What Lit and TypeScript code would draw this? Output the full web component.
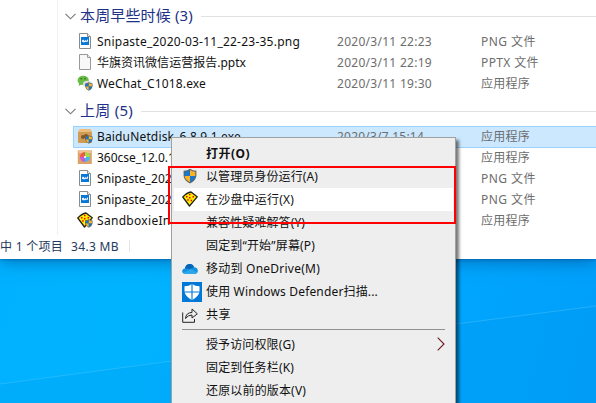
import { LitElement, html, css, svg, nothing } from "lit";
import { customElement, property } from "lit/decorators.js";

const shield = svg`<path d="M8 .8Q10.5 2.6 14.4 2.8V8Q13.8 12.6 8 15.4 2.2 12.6 1.6 8V2.8Q5.5 2.6 8 .8Z" fill="#5f6468"/><path d="M8 2Q6 3.5 2.7 3.8V8H8Z" fill="#1677cc"/><path d="M8 2Q10 3.5 13.3 3.8V8H8Z" fill="#fbb324"/><path d="M8 8H2.7Q3.2 12 8 14.2Z" fill="#fbb324"/><path d="M8 8H13.3Q12.8 12 8 14.2Z" fill="#1677cc"/>`;
const pizza = svg`<path d="M.8 6 Q5 1.5 9 1 L15.2 5.8 7.5 15Z" fill="#ffed00" stroke="#222" stroke-width="1.3" stroke-linejoin="round"/><g fill="#f00000"><rect x="7" y="2.8" width="1.5" height="1.5"/><rect x="4" y="5" width="1.5" height="1.5"/><rect x="7" y="6" width="1.5" height="1.5"/><rect x="10.5" y="5" width="1.5" height="1.5"/><rect x="5.2" y="8.2" width="1.5" height="1.5"/><rect x="8.6" y="8.7" width="1.5" height="1.5"/></g>`;
const badge = svg`<g transform="translate(7.2 6.8) scale(.58)">${shield}</g>`;
const icons: Record<string, unknown> = {
  png: svg`<path d="M2.5.5H10.5L13.5 3.5V15.5H2.5Z" fill="#fff" stroke="#8b8b8b"/><path d="M10.5 .5V3.5H13.5" fill="#eee" stroke="#8b8b8b"/><rect x="4" y="4" width="8" height="8" fill="#0877d5"/><path d="M5 9.3V7.5L6.2 6.5 7.5 8 8.5 7 9.4 8 11 6V9L10 8.3 9 9.3 8 8.6 7 9.8 6 8.6Z" fill="#fff"/>`,
  page: svg`<path d="M2.5.5H10.5L13.5 3.5V15.5H2.5Z" fill="#f8f8f8" stroke="#999"/><path d="M10.5 .5V3.5H13.5" fill="#eee" stroke="#999"/>`,
  wechat: svg`<ellipse cx="6.2" cy="5.4" rx="5.6" ry="4.7" fill="#69bd45"/><path d="M2 8 1.7 11 5 9Z" fill="#69bd45"/><circle cx="4.2" cy="3.8" r=".8" fill="#265d20"/><circle cx="8" cy="3.8" r=".8" fill="#265d20"/><ellipse cx="10.5" cy="9" rx="4.5" ry="3.2" fill="#dedede"/>${badge}`,
  box: svg`<path d="M3 1H13L15 4V14Q15 15 14 15H2Q1 15 1 14V4Z" fill="#d09b55"/><path d="M3 1H13L15 4H1Z" fill="#ebbf7b"/><circle cx="6" cy="9" r="2" fill="#815525"/><circle cx="9" cy="8" r="2" fill="#815525"/>${badge}`,
  browser: svg`<rect x=".8" y="1" width="14" height="14" fill="#dba269"/><path d="M1 1H15L14 4H2Z" fill="#efc498"/><path d="M8 8V3A5 5 0 0 1 13 8Z" fill="#9be04a"/><path d="M8 8H13A5 5 0 0 1 8 13Z" fill="#42b8ef"/><path d="M8 8V13A5 5 0 0 1 3 8Z" fill="#c957da"/><path d="M8 8H3A5 5 0 0 1 8 3Z" fill="#f4574a"/><circle cx="8" cy="8" r="1.1" fill="#fff"/>`,
  sandboxie: svg`${pizza}${badge}`,
  shield, pizza,
  cloud: svg`<path d="M3 12.7Q.2 12.7.2 10 .2 7.7 3 7.2 4 3 7.8 3 10.8 3 12 6.2 15.8 6.5 15.8 9.7 15.8 12.7 13 12.7Z" fill="#1490df"/><path d="M3 7.2Q4 3 7.8 3 10.8 3 12 6.2L8 8Z" fill="#0364b8"/><path d="M1 12 9 8 15 11.5Q14 12.7 13 12.7H3Z" fill="#28a8ea"/>`,
  defender: svg`<rect width="16" height="16" fill="#0078d7"/><path d="M8 1.6Q10.5 3.3 14 3.4V8Q13.2 11.8 8 14.5 2.8 11.8 2 8V3.4Q5.5 3.3 8 1.6Z" fill="#fff"/><path d="M8 1V15M1.5 8H14.5" stroke="#0078d7" stroke-width=".9"/>`,
  share: svg`<path d="M.7 5.5V15.3H12.5V12M3.5 11.5Q4 5.5 10 5.5V2L15.3 6.8 10 11V8Q6 8 3.5 11.5Z" fill="none" stroke="#222" stroke-width="1"/>`,
};
const icon = (name: string) => html`<svg class="icon ${name}" viewBox="0 0 16 16">${icons[name]}</svg>`;

/** A single-line label whose tracking is adjusted to a known advance width. */
@customElement("fit-label")
class FitLabel extends LitElement {
  static styles = css`:host{display:block;white-space:pre}span{display:inline-block}`;
  @property() text = "";
  @property({ type: Number }) advance = 0;
  firstUpdated() {
    const span = this.renderRoot.querySelector("span")!;
    const fit = () => {
      span.style.letterSpacing = "0";
      const natural = span.getBoundingClientRect().width;
      span.style.letterSpacing = `${(this.advance - natural) / Array.from(this.text).length}px`;
    };
    fit();
    document.fonts.ready.then(fit);
  }
  render() { return html`<span>${this.text}</span>`; }
}

interface FileRow { icon: string; name: string; w: number; date?: string; dw?: number; kind: string; kw: number; selected?: boolean }
const recent: FileRow[] = [
  { icon: "png", name: "Snipaste_2020-03-11_22-23-35.png", w: 203, date: "2020/3/11 22:23", dw: 95, kind: "PNG 文件", kw: 55 },
  { icon: "page", name: "华旗资讯微信运营报告.pptx", w: 149, date: "2020/3/11 22:19", dw: 95, kind: "PPTX 文件", kw: 58 },
  { icon: "wechat", name: "WeChat_C1018.exe", w: 109, date: "2020/3/11 19:30", dw: 95, kind: "应用程序", kw: 49 },
];
const lastWeek: FileRow[] = [
  { icon: "box", name: "BaiduNetdisk_6.8.9.1.exe", w: 144, date: "2020/3/7 15:14", dw: 87, kind: "应用程序", kw: 49, selected: true },
  { icon: "browser", name: "360cse_12.0.1190.0.exe", w: 131, kind: "应用程序", kw: 49 },
  { icon: "png", name: "Snipaste_2020-03-03.png", w: 143, kind: "PNG 文件", kw: 55 },
  { icon: "png", name: "Snipaste_2020-03-02.png", w: 143, kind: "PNG 文件", kw: 55 },
  { icon: "sandboxie", name: "SandboxieInstall.exe", w: 122, kind: "应用程序", kw: 49 },
];
const commands = [
  { text: "打开(O)", w: 44, cls: "bold" },
  { text: "以管理员身份运行(A)", w: 112, icon: "shield" },
  { text: "在沙盘中运行(X)", w: 88, icon: "pizza", cls: "hot" },
  { text: "兼容性疑难解答(Y)", w: 99 },
  { text: "固定到“开始”屏幕(P)", w: 109 },
  { text: "移动到 OneDrive(M)", w: 114, icon: "cloud" },
  { text: "使用 Windows Defender扫描...", w: 172, icon: "defender" },
  { text: "共享", w: 25, icon: "share" },
];
const more = [
  { text: "授予访问权限(G)", w: 89, arrow: true },
  { text: "固定到任务栏(K)", w: 88 },
  { text: "还原以前的版本(V)", w: 100 },
];

@customElement("app-root")
class AppRoot extends LitElement {
  static styles = css`
    :host{display:block;position:relative;width:596px;height:403px;overflow:hidden;background:linear-gradient(105deg,#00b0ff 0%,#00b3ff 30%,#00a8ff 65%,#009ffa 100%);font:12px/21px "Noto Sans","Noto Sans CJK SC",sans-serif;color:#111}
    *{box-sizing:border-box}
    .desktop{position:absolute;left:0;top:0;width:596px;height:403px}
    .window{position:relative;height:259px;background:#fff;box-shadow:0 2px 16px #003f8090,0 0 3px #003f80b0}
    .pane{margin-left:57px;height:235px;border-left:1px solid #f0f0f0;padding-top:5px}
    .heading{height:22px;display:flex;align-items:center;padding-left:7px;font-size:15px;color:#1e3287}
    .heading svg{width:11px;height:7px;margin-right:4px;flex:none}
    .heading fit-label{line-height:20px;height:22px}
    .heading i{height:1px;background:#e2e2e2;flex:1;margin-left:8px}
    .rows{padding:4px 0 0 15px}
    .second{margin-top:6px}
    .row{height:21px;display:grid;grid-template-columns:23px 240px 144px 1fr;align-items:center;border:1px solid transparent;border-right:0}
    .row fit-label{height:21px;line-height:20px}
    .row.selected{height:22px;margin-bottom:-1px;background:#cce8ff;border-color:#99d1ff}
    .icon{width:16px;height:16px;margin-left:3px;display:block}
    .row .icon{align-self:start;margin-top:1px}
    .muted{color:#6d6d6d}
    .status{height:24px;display:flex;align-items:center;color:#24395d;gap:8px;padding-bottom:2px}
    .status i{width:1px;height:12px;background:#e4e4e4;margin-left:2px}
    .menu{position:absolute;left:171px;top:137px;width:285px;height:275px;background:#eee;border:1px solid #a0a0a0;padding:4px 2px;box-shadow:3px 3px 3px #0008}
    .item{height:23px;display:grid;grid-template-columns:32px 1fr 16px;align-items:center}
    .item fit-label{line-height:22px}
    .item .icon{margin-left:8px}
    .item .shield,.item .pizza{margin-bottom:1px}
    .item .defender{width:20px;height:20px}
    .bold{font-weight:700}.hot{background:#fff}
    .sep{height:1px;background:#919191;margin:3px 8px}
    .arrow{width:8px;height:14px;margin-bottom:2px}
    .mark{position:absolute;left:168px;top:166px;width:288px;height:58px;border:2px solid #f00}
  `;
  heading(text: string, w: number) {
    return html`<div class="heading"><svg viewBox="0 0 11 7"><path d="M.5.8 5.5 5.8 10.5.8" fill="none" stroke="#777" stroke-width="1.1"/></svg><fit-label text=${text} advance=${w}></fit-label><i></i></div>`;
  }
  row(r: FileRow) {
    return html`<div class="row ${r.selected ? "selected" : ""}">${icon(r.icon)}<fit-label text=${r.name} advance=${r.w}></fit-label><span>${r.date ? html`<fit-label class="muted" text=${r.date} advance=${r.dw}></fit-label>` : nothing}</span><fit-label class="muted" text=${r.kind} advance=${r.kw}></fit-label></div>`;
  }
  item(c: { text: string; w: number; icon?: string; cls?: string; arrow?: boolean }) {
    return html`<div class="item ${c.cls ?? ""}"><span>${c.icon ? icon(c.icon) : nothing}</span><fit-label text=${c.text} advance=${c.w}></fit-label>${c.arrow ? html`<svg class="arrow" viewBox="0 0 8 14"><path d="M.7.7 7 7 .7 13.3" fill="none" stroke="#6b1a24" stroke-width="1.1"/></svg>` : nothing}</div>`;
  }
  render() {
    return html`
      <svg class="desktop" viewBox="0 0 596 403"><path d="M0 384 172 361 456 324 596 306V403H0Z" fill="#0088dd" opacity=".13"/><path d="M0 384 172 361 456 324 596 306" fill="none" stroke="#55c8ff" opacity=".4"/></svg>
      <div class="window">
        <div class="pane">
          <section>${this.heading("本周早些时候 (3)", 113)}<div class="rows">${recent.map((r) => this.row(r))}</div></section>
          <section class="second">${this.heading("上周 (5)", 53)}<div class="rows">${lastWeek.map((r) => this.row(r))}</div></section>
        </div>
        <div class="status"><fit-label text="中 1 个项目" advance="63"></fit-label><fit-label text="34.3 MB" advance="48"></fit-label><i></i></div>
      </div>
      <div class="menu">${commands.map((c) => this.item(c))}<div class="sep"></div>${more.map((c) => this.item(c))}</div>
      <div class="mark"></div>`;
  }
}
